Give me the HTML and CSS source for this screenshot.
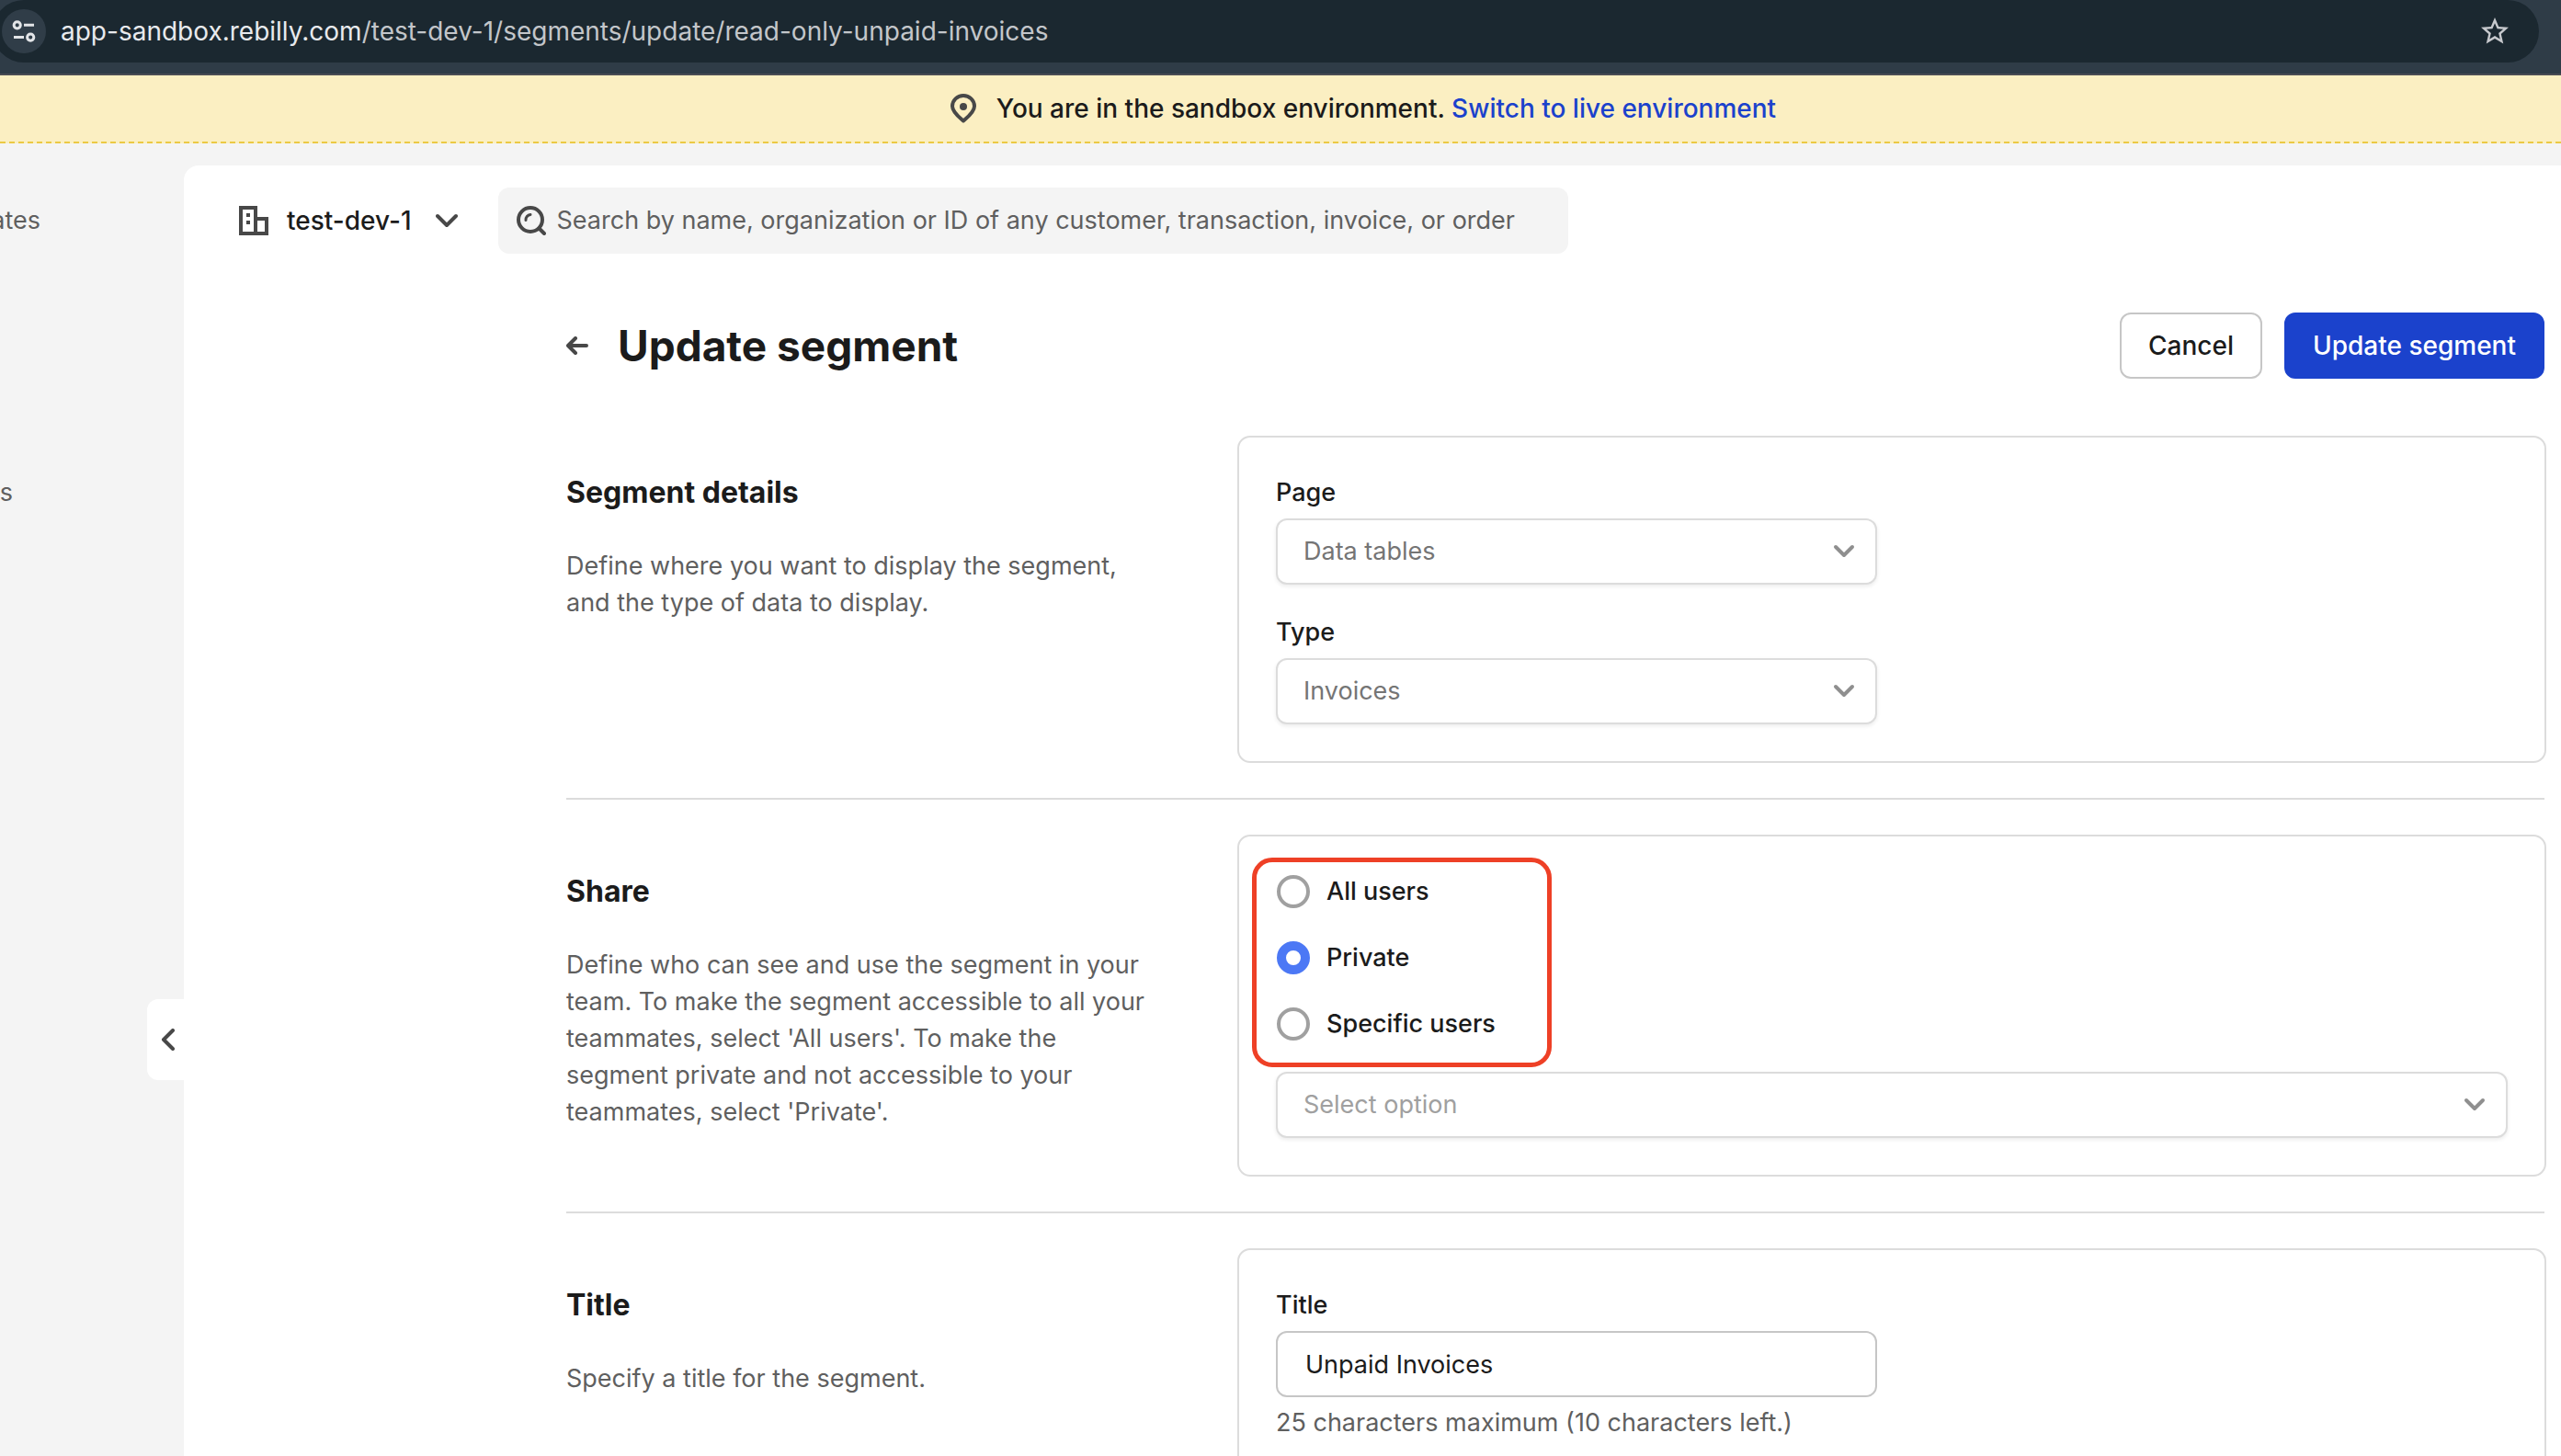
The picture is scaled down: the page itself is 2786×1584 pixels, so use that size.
FILE: index.html
```html
<!DOCTYPE html>
<html lang="en">
<head>
<meta charset="utf-8">
<title>Update segment</title>
<link rel="stylesheet" href="styles.css">
</head>
<body>
<div class="browser-bar">
  <div class="omnibox">
    <button class="site-info" type="button" aria-label="Site information">
      <svg width="28" height="28" viewBox="0 0 28 28" fill="none" stroke="#e3e5e8" stroke-width="3">
        <circle cx="6.700" cy="7.300" r="3.600"/><path d="M14 7.300h11M3 20.600h11"/><circle cx="21.200" cy="20.600" r="3.600"/>
      </svg>
    </button>
    <span class="url"><span class="url-host">app-sandbox.rebilly.com</span>/test-dev-1/segments/update/read-only-unpaid-invoices</span>
    <button class="bookmark" type="button" aria-label="Bookmark this page">
      <svg width="36" height="36" viewBox="0 0 24 24" fill="#c7c9cd"><path d="M22 9.24l-7.19-.62L12 2 9.19 8.63 2 9.24l5.46 4.73L5.82 21 12 17.27 18.18 21l-1.63-7.03L22 9.24zM12 15.4l-3.76 2.27 1-4.28-3.32-2.88 4.38-.38L12 6.1l1.71 4.04 4.38.38-3.32 2.88 1 4.28L12 15.4z"/></svg>
    </button>
  </div>
</div>

<div class="env-banner">
  <svg width="28" height="32" viewBox="0 0 28 32" fill="none" stroke="#484848" stroke-width="4" stroke-linejoin="round">
    <path d="M14 29.500C10 26 2 20 2 13.500a12 11.500 0 0 1 24 0C26 20 18 26 14 29.500z"/><circle cx="14" cy="14" r="4" fill="#484848" stroke="none"/>
  </svg>
  <span>You are in the sandbox environment. <a href="#live">Switch to live environment</a></span>
</div>

<div class="shell">
  <nav class="sidebar" aria-label="Main">
    <a class="nav-item" href="#a">ates</a>
    <a class="nav-item nav-item-lower" href="#b">s</a>
    <button class="collapse" type="button" aria-label="Collapse sidebar">
      <svg width="16" height="24" viewBox="0 0 16 24" fill="none" stroke="#484848" stroke-width="4" stroke-linecap="round" stroke-linejoin="round"><path d="M13 2L3 12l10 10"/></svg>
    </button>
  </nav>

  <main class="panel">
    <header class="topbar">
      <button class="org" type="button">
        <svg width="32" height="32" viewBox="0 0 32 32" fill="none" stroke="#484848" stroke-width="4"><path d="M18 30V2H2v28h28V14H18"/><path d="M10 8v4M10 16v4"/></svg>
        <span>test-dev-1</span>
        <svg width="24" height="16" viewBox="0 0 24 16" fill="none" stroke="#484848" stroke-width="4" stroke-linecap="round" stroke-linejoin="round"><path d="M2 3l10 10L22 3"/></svg>
      </button>
      <label class="search">
        <svg width="32" height="32" viewBox="0 0 32 32" fill="none" stroke="#484848" stroke-width="4" stroke-linecap="round"><circle cx="15" cy="15" r="13"/><path d="M25 25l5 5"/><path d="M10 15.500a5.500 5.500 0 0 1 5-6" stroke-width="3"/></svg>
        <input type="search" placeholder="Search by name, organization or ID of any customer, transaction, invoice, or order" aria-label="Search">
      </label>
    </header>

    <form class="content">
      <div class="title-row">
        <a class="back" href="#back" aria-label="Back"><svg width="24" height="20" viewBox="0 0 24 20" fill="none" stroke="#484848" stroke-width="4" stroke-linecap="round" stroke-linejoin="round"><path d="M10 2L2 10l8 8M3 10h19"/></svg></a>
        <h1>Update segment</h1>
        <button class="btn" type="button">Cancel</button>
        <button class="btn btn-primary" type="submit">Update segment</button>
      </div>

      <section class="section">
        <div class="intro">
          <h2>Segment details</h2>
          <p>Define where you want to display the segment, and the type of data to display.</p>
        </div>
        <div class="card">
          <div class="field">
            <label for="page">Page</label>
            <div class="select half"><select id="page"><option>Data tables</option></select><svg class="chevron" viewBox="0 0 24 16"><path d="M3 3l9 9 9-9"/></svg></div>
          </div>
          <div class="field">
            <label for="type">Type</label>
            <div class="select half"><select id="type"><option>Invoices</option></select><svg class="chevron" viewBox="0 0 24 16"><path d="M3 3l9 9 9-9"/></svg></div>
          </div>
        </div>
      </section>

      <hr>

      <section class="section">
        <div class="intro">
          <h2>Share</h2>
          <p>Define who can see and use the segment in your team. To make the segment accessible to all your teammates, select 'All users'. To make the segment private and not accessible to your teammates, select 'Private'.</p>
        </div>
        <div class="card">
          <div class="radios" role="radiogroup" aria-label="Share">
            <label><input type="radio" name="share">All users</label>
            <label><input type="radio" name="share" checked>Private</label>
            <label><input type="radio" name="share">Specific users</label>
            <div class="highlight"></div>
          </div>
          <div class="select empty"><select aria-label="Users"><option>Select option</option></select><svg class="chevron" viewBox="0 0 24 16"><path d="M3 3l9 9 9-9"/></svg></div>
        </div>
      </section>

      <hr>

      <section class="section">
        <div class="intro">
          <h2>Title</h2>
          <p>Specify a title for the segment.</p>
        </div>
        <div class="card">
          <div class="field">
            <label for="title">Title</label>
            <input class="text half" id="title" type="text" value="Unpaid Invoices" maxlength="25">
            <span class="hint">25 characters maximum (10 characters left.)</span>
          </div>
        </div>
      </section>
    </form>
  </main>
</div>
</body>
</html>
```
FILE: styles.css
```css
* { box-sizing: border-box; }

body {
  margin: 0;
  height: 100vh;
  overflow: hidden;
  display: flex;
  flex-direction: column;
  background: #f4f4f4;
  color: #1b1b1b;
  font: 400 27px/40px Inter, "Liberation Sans", sans-serif;
}

button, input, select { font: inherit; color: inherit; }
button { border: 0; padding: 0; background: none; }
a { color: #1b42cc; text-decoration: none; }
svg { display: block; flex: none; }

/* Browser address bar */
.browser-bar {
  flex: none;
  background: #2f3c47;
  border-bottom: 2px solid #494c54;
  padding: 0 24px 12px 0;
}
.omnibox {
  display: flex;
  align-items: center;
  height: 68px;
  margin-left: -8px;
  padding: 0 30px 0 10px;
  border-radius: 34px;
  background: #1b2830;
}
.site-info {
  display: grid;
  place-items: center;
  width: 48px;
  height: 48px;
  border-radius: 50%;
  background: #303d48;
}
.url { flex: 1; margin-left: 16px; color: #c3c6ca; font-size: 28px; }
.url-host { color: #e8eaed; }

/* Sandbox notice */
.env-banner {
  flex: none;
  display: flex;
  align-items: center;
  justify-content: center;
  gap: 22px;
  padding: 16px 0 16px 180px;
  background: #fbefc2;
  border-bottom: 2px dashed #ecc944;
  font-size: 28px;
  font-weight: 500;
}

.shell { flex: 1; min-height: 0; display: flex; padding-top: 24px; }

.sidebar {
  position: relative;
  flex: none;
  width: 200px;
  padding-top: 40px;
}
.nav-item { display: block; width: 44px; direction: rtl; color: #5f5f5f; }
.nav-item-lower { width: 14px; margin-top: 256px; }
.collapse {
  position: absolute;
  top: 907px;
  right: 0;
  width: 40px;
  height: 88px;
  padding-left: 15px;
  border-radius: 12px 0 0 12px;
  background: #fff;
}

.panel {
  flex: 1;
  min-width: 0;
  overflow: hidden;
  border-top-left-radius: 16px;
  background: #fff;
}

.topbar { display: flex; gap: 44px; padding: 24px 60px; }
.org { display: flex; align-items: center; gap: 20px; font-size: 28px; font-weight: 500; }
.org svg:last-child { margin-left: 6px; }
.search {
  display: flex;
  align-items: center;
  gap: 12px;
  width: 1164px;
  height: 72px;
  padding: 0 20px;
  border-radius: 12px;
  background: #f4f4f4;
}
.search input {
  flex: 1;
  min-width: 0;
  padding: 0;
  border: 0;
  outline: 0;
  background: none;
}
.search input::placeholder { color: #5f5f5f; opacity: 1; }

.content { padding: 40px 16px 0 416px; }

.title-row { display: flex; align-items: center; margin: 0 2px 62px 0; }
h1 { flex: 1; margin: 0 0 0 32px; font-size: 46px; line-height: 64px; font-weight: 700; }
.btn {
  height: 72px;
  padding: 0 29px;
  border: 2px solid #c6c6c6;
  border-radius: 12px;
  background: #fff;
  font-size: 28px;
  font-weight: 500;
}
.btn-primary { margin-left: 24px; border-color: #1b42cc; background: #1b42cc; color: #fff; }

.section { display: flex; justify-content: space-between; gap: 80px; }
.intro { flex: 0 1 650px; padding-top: 42px; }
h2 { margin: 0 0 40px; font-size: 32px; line-height: 40px; font-weight: 700; }
.intro p { margin: 0; color: #5f5f5f; }
hr { margin: 38px 2px 38px 0; border: 0; border-top: 2px solid #dcdcdc; }

.card {
  flex: 0 0 1424px;
  display: flex;
  flex-direction: column;
  gap: 32px;
  padding: 40px;
  border: 2px solid #dcdcdc;
  border-radius: 14px;
}
.field { display: flex; flex-direction: column; gap: 8px; }
.field label { font-weight: 500; }
.half { width: 654px; }

.select { position: relative; }
.select select {
  display: block;
  width: 100%;
  height: 72px;
  padding: 0 60px 0 28px;
  border: 2px solid #dcdcdc;
  border-radius: 12px;
  background: #fff;
  box-shadow: 0 2px 4px rgba(0, 0, 0, 0.08);
  color: #757575;
  appearance: none;
}
.select.empty select { color: #a0a0a0; }
.chevron {
  position: absolute;
  top: 28px;
  right: 24px;
  width: 24px;
  height: 16px;
  fill: none;
  stroke: #8f8f8f;
  stroke-width: 4;
  stroke-linecap: round;
  stroke-linejoin: round;
  pointer-events: none;
}

.text {
  height: 72px;
  padding: 0 30px;
  border: 2px solid #c6c6c6;
  border-radius: 12px;
  background: #fff;
}
.hint { color: #5f5f5f; }

.radios { position: relative; display: flex; flex-direction: column; gap: 32px; }
.radios label { display: flex; align-items: center; gap: 18px; font-weight: 500; }
.radios input {
  width: 36px;
  height: 36px;
  margin: 0 0 0 1px;
  border: 4px solid #a0a0a0;
  border-radius: 50%;
  background: #fff;
  appearance: none;
}
.radios input:checked { border: 10px solid #4c78f5; }

/* Callout drawn round the radio group */
.highlight {
  position: absolute;
  top: -17px;
  left: -26px;
  width: 326px;
  height: 228px;
  border: 5px solid #ee4026;
  border-radius: 22px;
  pointer-events: none;
}
```
